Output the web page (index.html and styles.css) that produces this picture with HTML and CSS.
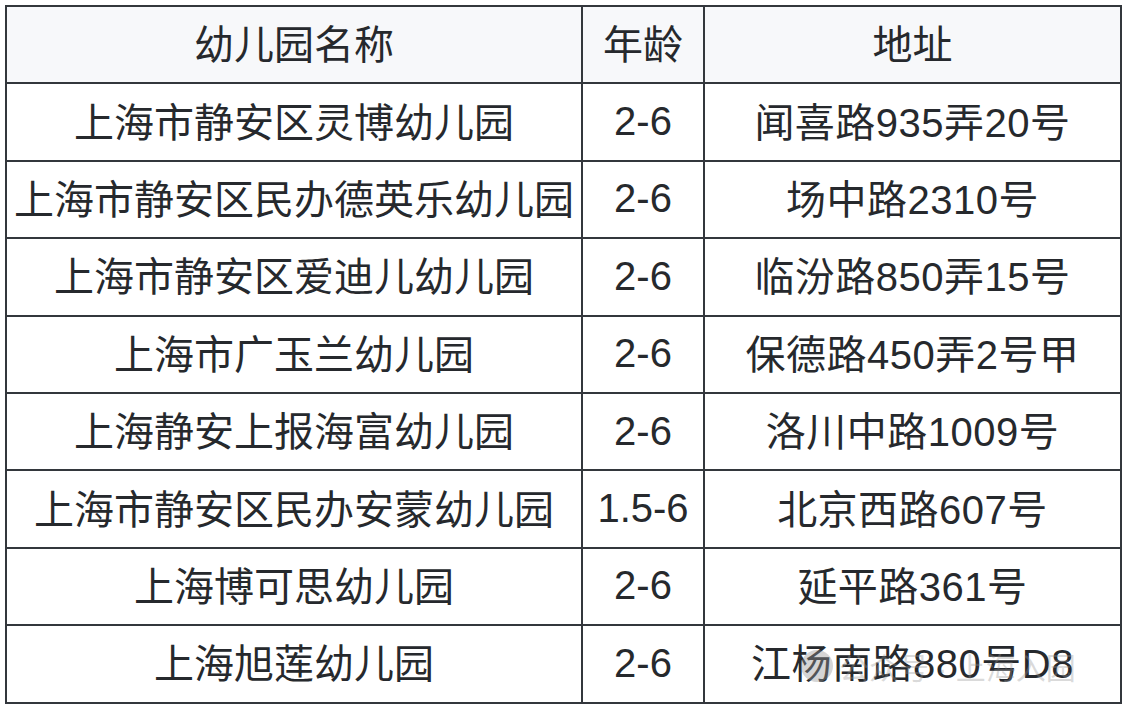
FILE: index.html
```html
<!DOCTYPE html>
<html lang="zh-CN">
<head>
<meta charset="utf-8">
<title>幼儿园</title>
<link rel="stylesheet" href="styles.css">
</head>
<body>
<div class="wrap">
<table class="kg">
  <colgroup>
    <col class="c1"><col class="c2"><col class="c3">
  </colgroup>
  <thead>
    <tr><th>幼儿园名称</th><th>年龄</th><th>地址</th></tr>
  </thead>
  <tbody>
    <tr><td>上海市静安区灵博幼儿园</td><td class="age">2-6</td><td class="addr">闻喜路935弄20号</td></tr>
    <tr><td>上海市静安区民办德英乐幼儿园</td><td class="age">2-6</td><td class="addr">场中路2310号</td></tr>
    <tr><td>上海市静安区爱迪儿幼儿园</td><td class="age">2-6</td><td class="addr">临汾路850弄15号</td></tr>
    <tr><td>上海市广玉兰幼儿园</td><td class="age">2-6</td><td class="addr">保德路450弄2号甲</td></tr>
    <tr><td>上海静安上报海富幼儿园</td><td class="age">2-6</td><td class="addr">洛川中路1009号</td></tr>
    <tr><td>上海市静安区民办安蒙幼儿园</td><td class="age">1.5-6</td><td class="addr">北京西路607号</td></tr>
    <tr><td>上海博可思幼儿园</td><td class="age">2-6</td><td class="addr">延平路361号</td></tr>
    <tr><td>上海旭莲幼儿园</td><td class="age">2-6</td><td class="addr last">江杨南路880号D8<span class="wm"><span class="wm-logo"></span>公众号 · 上海入园</span></td></tr>
  </tbody>
</table>
</div>
</body>
</html>
```
FILE: styles.css
```css
html, body {
  margin: 0;
  padding: 0;
  background: #ffffff;
}
.wrap {
  padding: 5px 0 0 5px;
}
.kg {
  border-collapse: collapse;
  table-layout: fixed;
  width: 1115px;
  font-family: "Liberation Sans", "Noto Sans CJK SC", sans-serif;
  font-size: 40px;
  color: #26292d;
}
.c1 { width: 576px; }
.c2 { width: 122px; }
.c3 { width: 417px; }
.kg th, .kg td {
  border: 2px solid #33373c;
  text-align: center;
  vertical-align: middle;
  padding: 0 0 5px 0;
  height: 70.4px;
  white-space: nowrap;
  font-weight: normal;
}
.kg td.age {
  padding: 2px 0 3px 0;
}
.kg td.addr {
  letter-spacing: 0.5px;
}
.kg th {
  background: #f7f8fa;
}
.last {
  position: relative;
}
.wm {
  position: absolute;
  left: 96px;
  top: 18px;
  font-size: 30px;
  letter-spacing: 0;
  color: rgba(150, 150, 150, 0.35);
  display: flex;
  align-items: center;
  gap: 6px;
  pointer-events: none;
}
.wm-logo {
  display: inline-block;
  width: 32px;
  height: 32px;
  border-radius: 50%;
  background: rgba(150, 150, 150, 0.4);
}
```
